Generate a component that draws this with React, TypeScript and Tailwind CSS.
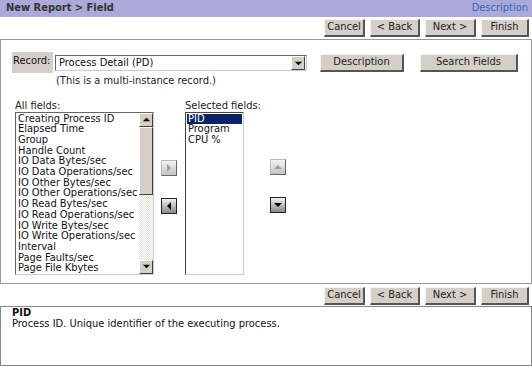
import React from 'react';

const allFields = [
  'Creating Process ID',
  'Elapsed Time',
  'Group',
  'Handle Count',
  'IO Data Bytes/sec',
  'IO Data Operations/sec',
  'IO Other Bytes/sec',
  'IO Other Operations/sec',
  'IO Read Bytes/sec',
  'IO Read Operations/sec',
  'IO Write Bytes/sec',
  'IO Write Operations/sec',
  'Interval',
  'Page Faults/sec',
  'Page File Kbytes',
];

const selectedFields = ['PID', 'Program', 'CPU %'];

function Btn({ label, w }: { label: string; w: string }) {
  return (
    <div
      className={`${w} h-[18px] flex items-center justify-center bg-[#d4d0c8] border-t border-l border-[#f4f3f0] border-r-2 border-b-2 border-r-[#555] border-b-[#555] text-[#222]`}
    >
      {label}
    </div>
  );
}

function NavButtons() {
  return (
    <div className="flex justify-end gap-[5px] pr-[3px]">
      <Btn label="Cancel" w="w-[41px]" />
      <Btn label="< Back" w="w-[50px]" />
      <Btn label="Next >" w="w-[51px]" />
      <Btn label="Finish" w="w-[48px]" />
    </div>
  );
}

type Dir = 'up' | 'down' | 'left' | 'right';

function Tri({ dir, color, size = 10 }: { dir: Dir; color: string; size?: number }) {
  const pts = {
    up: '1,7 9,7 5,3',
    down: '1,3 9,3 5,7',
    left: '7,1 7,9 3,5',
    right: '3,1 3,9 7,5',
  }[dir];
  return (
    <svg width={size} height={size} viewBox="0 0 10 10">
      <polygon points={pts} fill={color} />
    </svg>
  );
}

function ArrowBtn({ dir, dark }: { dir: Dir; dark?: boolean }) {
  return dark ? (
    <div className="w-[16px] h-[16px] flex items-center justify-center border border-[#222] bg-gradient-to-b from-[#f2f2f2] to-[#8a8a8a]">
      <Tri dir={dir} color="#000" />
    </div>
  ) : (
    <div className="w-[16px] h-[16px] flex items-center justify-center border border-t-[#bbb] border-l-[#bbb] border-r-[#666] border-b-[#666] bg-gradient-to-b from-[#f4f4f4] to-[#c4c4c4]">
      <Tri dir={dir} color="#9c9c9c" />
    </div>
  );
}

function ScrollBtn({ dir }: { dir: 'up' | 'down' }) {
  return (
    <div className="w-[14px] h-[14px] flex items-center justify-center bg-[#d4d0c8] border border-t-[#fff] border-l-[#fff] border-r-[#404040] border-b-[#404040]">
      <Tri dir={dir} color="#000" size={9} />
    </div>
  );
}

export default function App() {
  return (
    <div className="w-[532px] h-[366px] bg-white text-[11px] text-[#111] font-['DejaVu_Sans_Condensed','DejaVu_Sans',sans-serif] overflow-hidden">
      <div className="h-[17px] bg-[#aaa9d9] flex items-center justify-between pl-[6px] pr-[4px]">
        <span className="font-bold text-[#333]">New Report &gt; Field</span>
        <span className="text-[#3468c0]">Description</span>
      </div>

      <div className="pt-[2px] h-[22px]">
        <NavButtons />
      </div>

      <div className="h-[245px] border border-[#999] pl-[11px] pt-[12px]">
        <div className="flex items-start">
          <div className="w-[41px] h-[21px] bg-[#d4d0c8] pt-[1px] pl-[1px] text-[#111]">Record:</div>
          <div className="ml-[2px] mt-[3px]">
            <div className="w-[252px] h-[16px] border border-t-[#666] border-l-[#666] border-r-[#ccc] border-b-[#ccc] flex items-center justify-between pl-[3px] pr-[1px]">
              <span>Process Detail (PD)</span>
              <ScrollBtn dir="down" />
            </div>
            <div className="pt-[2px] pl-[1px] text-[#222]">(This is a multi-instance record.)</div>
          </div>
          <div className="ml-[13px] mt-[2px]">
            <Btn label="Description" w="w-[84px]" />
          </div>
          <div className="ml-[16px] mt-[2px]">
            <Btn label="Search Fields" w="w-[98px]" />
          </div>
        </div>

        <div className="flex mt-[10px] pl-[3px]">
          <div>
            <div className="h-[12px] leading-[12px] text-[#222]">All fields:</div>
            <div className="w-[139px] h-[163px] border border-t-[#666] border-l-[#666] border-r-[#ccc] border-b-[#ccc] flex">
              <div className="flex-1 pl-[2px] pt-[1px] leading-[10.7px] overflow-hidden whitespace-nowrap">
                {allFields.map((f) => (
                  <div key={f}>{f}</div>
                ))}
              </div>
              <div className="w-[14px] flex flex-col bg-[repeating-conic-gradient(#e4e2dc_0%_25%,#fff_0%_50%)] bg-[length:2px_2px]">
                <ScrollBtn dir="up" />
                <div className="h-[68px] bg-[#d4d0c8] border border-t-[#fff] border-l-[#fff] border-r-[#404040] border-b-[#404040]" />
                <div className="flex-1" />
                <ScrollBtn dir="down" />
              </div>
            </div>
          </div>

          <div className="flex flex-col gap-[22px] pt-[60px] ml-[7px]">
            <ArrowBtn dir="right" />
            <ArrowBtn dir="left" dark />
          </div>

          <div className="ml-[8px] w-[59px]">
            <div className="h-[12px] leading-[12px] text-[#222] whitespace-nowrap">Selected fields:</div>
            <div className="w-[59px] h-[163px] border border-t-[#444] border-l-[#444] border-r-[#ccc] border-b-[#ccc] pt-[1px] px-[1px] leading-[10.7px]">
              {selectedFields.map((f, i) => (
                <div key={f} className={i === 0 ? 'bg-[#0a246a] text-white pl-[1px]' : 'pl-[1px]'}>
                  {f}
                </div>
              ))}
            </div>
          </div>

          <div className="flex flex-col gap-[22px] pt-[59px] ml-[26px]">
            <ArrowBtn dir="up" />
            <ArrowBtn dir="down" dark />
          </div>
        </div>
      </div>

      <div className="pt-[3px] h-[22px]">
        <NavButtons />
      </div>

      <div className="h-[60px] w-[532px] border border-[#888] pl-[11px] leading-[11px]">
        <div className="font-bold">PID</div>
        <div>Process ID. Unique identifier of the executing process.</div>
      </div>
    </div>
  );
}
